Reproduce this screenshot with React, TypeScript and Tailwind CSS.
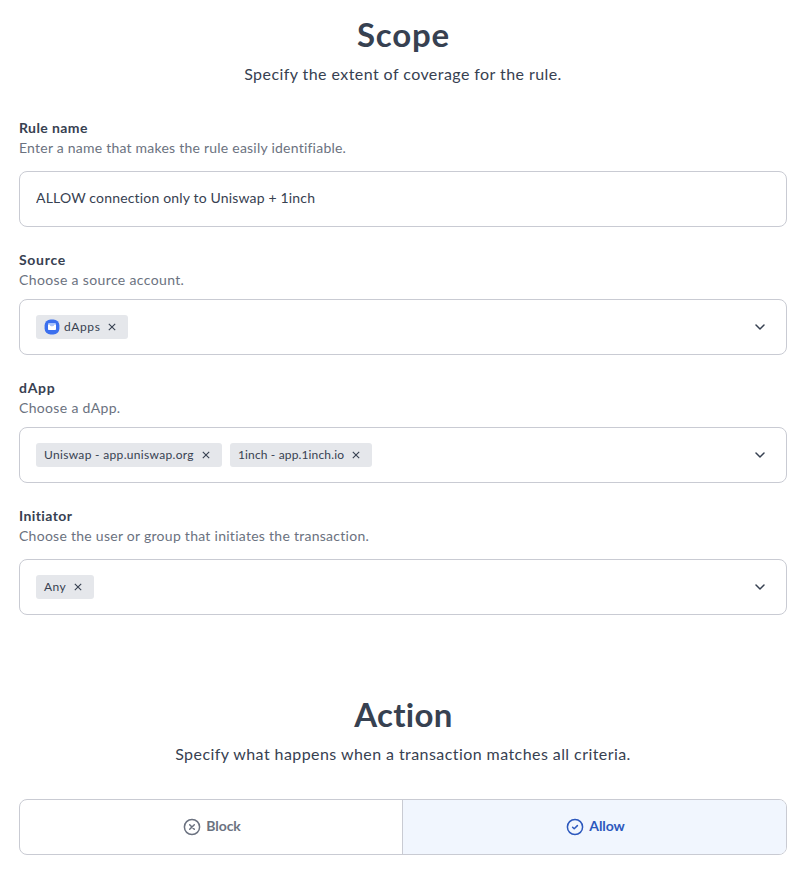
import React, { useState } from "react";

type Tag = {
  id: string;
  label: string;
  width: string;
  tracking: string;
  icon?: React.ReactNode;
};

const SOURCES: Tag[] = [
  { id: "dapps", label: "dApps", width: "w-[92px]", tracking: "tracking-[0.6px]", icon: <WalletIcon /> },
];

const DAPPS: Tag[] = [
  { id: "uniswap", label: "Uniswap - app.uniswap.org", width: "w-[186px]", tracking: "tracking-[0.32px]" },
  { id: "1inch", label: "1inch - app.1inch.io", width: "w-[142px]", tracking: "tracking-[0.14px]" },
];

const INITIATORS: Tag[] = [
  { id: "any", label: "Any", width: "w-[58px]", tracking: "tracking-[0.4px]" },
];

export default function App() {
  const [name, setName] = useState("ALLOW connection only to Uniswap + 1inch");
  const [action, setAction] = useState<"block" | "allow">("allow");

  return (
    <main className="min-h-screen bg-white pt-3.5 pr-[21px] pb-8 pl-[19px] font-['Lato',sans-serif] text-[#374151]">
      <Heading title="Scope" titleClass="pl-px tracking-[0.8px]" subtitle="Specify the extent of coverage for the rule." />

      <div className="mt-8 flex flex-col gap-[23px]">
        <Field
          label="Rule name"
          labelClass="tracking-[0.4px]"
          hint="Enter a name that makes the rule easily identifiable."
          hintClass="mb-[13px] tracking-[0.23px]"
        >
          <input
            value={name}
            onChange={(e) => setName(e.target.value)}
            aria-label="Rule name"
            className="block h-14 w-full rounded-lg border border-[#c9cbd3] px-4 pb-[3px] text-sm tracking-[0.17px] outline-none"
          />
        </Field>
        <Field
          label="Source"
          labelClass="tracking-[0.7px]"
          hint="Choose a source account."
          hintClass="mb-[9px] tracking-[0.36px]"
        >
          <TagSelect initial={SOURCES} />
        </Field>
        <Field
          label="dApp"
          labelClass="tracking-[0.7px]"
          hint="Choose a dApp."
          hintClass="mb-[9px] tracking-[0.33px]"
        >
          <TagSelect initial={DAPPS} />
        </Field>
        <Field
          label="Initiator"
          labelClass="tracking-[0.4px]"
          hint="Choose the user or group that initiates the transaction."
          hintClass="mb-[13px] tracking-[0.27px]"
        >
          <TagSelect initial={INITIATORS} />
        </Field>
      </div>

      <div className="mt-[79px]">
        <Heading
          title="Action"
          titleClass="pl-px tracking-[0.3px]"
          subtitle="Specify what happens when a transaction matches all criteria."
        />
      </div>

      <div className="mt-[33px] flex h-14 overflow-hidden rounded-lg border border-[#c9cbd3]">
        <ActionButton
          className="w-[383px] border-r border-[#c9cbd3] pl-0.5"
          active={action === "block"}
          onClick={() => setAction("block")}
          label="Block"
        >
          <path d="m6.7 6.7 4.6 4.6M11.3 6.7l-4.6 4.6" />
        </ActionButton>
        <ActionButton
          className="flex-1 pl-0.5"
          active={action === "allow"}
          onClick={() => setAction("allow")}
          label="Allow"
        >
          <path d="m6.6 9.2 1.6 1.5 3.2-3.1" />
        </ActionButton>
      </div>
    </main>
  );
}

/* ---------- UI bits ---------- */

function Heading({ title, titleClass, subtitle }: { title: string; titleClass: string; subtitle: string }) {
  return (
    <header className="text-center">
      <h2 className={`text-[33px] leading-10 font-bold ${titleClass}`}>{title}</h2>
      <p className="mt-2 text-base leading-6 tracking-[0.43px]">{subtitle}</p>
    </header>
  );
}

function Field({
  label,
  labelClass,
  hint,
  hintClass,
  children,
}: {
  label: string;
  labelClass: string;
  hint: string;
  hintClass: string;
  children: React.ReactNode;
}) {
  return (
    <section>
      <h3 className={`text-sm leading-5 font-bold ${labelClass}`}>{label}</h3>
      <p className={`text-sm leading-5 text-[#6b7280] ${hintClass}`}>{hint}</p>
      {children}
    </section>
  );
}

function TagSelect({ initial }: { initial: Tag[] }) {
  const [tags, setTags] = useState(initial);

  return (
    <div className="flex h-14 items-center gap-2 rounded-lg border border-[#c9cbd3] pr-5 pl-4">
      {tags.map((t) => (
        <span
          key={t.id}
          className={`flex h-6 items-center rounded-[3px] bg-[#e5e7eb] pr-3 pl-2 text-xs whitespace-nowrap ${t.width}`}
        >
          {t.icon}
          <span className={t.tracking}>{t.label}</span>
          <button
            onClick={() => setTags(tags.filter((o) => o.id !== t.id))}
            aria-label={`Remove ${t.label}`}
            className="ml-auto"
          >
            <svg width="8" height="8" viewBox="0 0 8 8" fill="none" stroke="currentColor" strokeWidth="1.1">
              <path d="m.8.8 6.4 6.4M7.2.8.8 7.2" />
            </svg>
          </button>
        </span>
      ))}
      <svg
        width="12"
        height="8"
        viewBox="0 0 12 8"
        fill="none"
        stroke="currentColor"
        strokeWidth="1.5"
        strokeLinecap="round"
        strokeLinejoin="round"
        className="ml-auto"
      >
        <path d="m2 2 4 4 4-4" />
      </svg>
    </div>
  );
}

function ActionButton({
  className,
  active,
  onClick,
  label,
  children,
}: {
  className: string;
  active: boolean;
  onClick: () => void;
  label: string;
  children: React.ReactNode;
}) {
  return (
    <button
      onClick={onClick}
      aria-pressed={active}
      className={`flex items-center justify-center gap-[5px] text-sm font-bold ${className} ${
        active ? "bg-[#f1f6fe] text-[#2c58bd]" : "text-[#6b7280]"
      }`}
    >
      <svg
        width="18"
        height="18"
        viewBox="0 0 18 18"
        fill="none"
        stroke="currentColor"
        strokeWidth="1.5"
        strokeLinecap="round"
        strokeLinejoin="round"
      >
        <circle cx="9" cy="9" r="7.6" />
        {children}
      </svg>
      <span className="pb-0.5 tracking-[-0.1px]">{label}</span>
    </button>
  );
}

function WalletIcon() {
  return (
    <svg width="16" height="16" viewBox="0 0 16 16" className="mr-1">
      <rect x=".6" y=".6" width="14.8" height="14.8" rx="6" fill="#3b6fee" />
      <rect x="4" y="4" width="8" height="2.4" rx="1" fill="#a9c2fa" />
      <path d="M4 5.8h1.9c.5 1.9 3.7 1.9 4.2 0H12V10c0 .6-.4 1-1 1H5c-.6 0-1-.4-1-1z" fill="#fff" />
      <path d="M5.9 5.8c.5 1.9 3.7 1.9 4.2 0z" fill="#a9c2fa" />
    </svg>
  );
}
